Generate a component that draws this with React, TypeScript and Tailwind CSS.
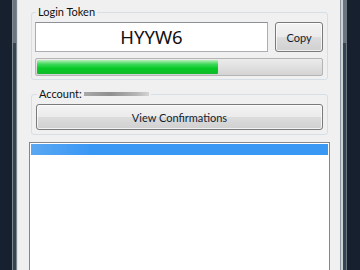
import * as React from 'react';

const btn =
  "rounded-[3px] border border-[#7a7a7a] bg-[linear-gradient(to_bottom,#f3f3f3_0%,#ebebeb_48%,#dcdcdc_52%,#d0d0d0_100%)] shadow-[inset_0_0_0_1px_rgba(255,255,255,0.7)] text-[11px] leading-none text-[#121c30] flex items-center justify-center";

function FrameLeft() {
  return (
    <div className="flex h-full">
      <div className="w-[1px] bg-[#7f8993]" />
      <div className="w-[3px] flex flex-col">
        <div className="h-[43px] bg-[#6a7580]" />
        <div className="flex-1 bg-[#364351]" />
      </div>
      <div className="w-[1px] bg-[#7b858f]" />
      <div className="w-[1px] bg-[#dfe3e6]" />
    </div>
  );
}

function FrameRight() {
  return (
    <div className="flex h-full">
      <div className="w-[1px] bg-[#8e979f]" />
      <div className="w-[2px] bg-[#cdd2d6]" />
      <div className="w-[3px] flex flex-col">
        <div className="h-[43px] bg-[#6a7580]" />
        <div className="flex-1 bg-[#364351]" />
      </div>
      <div className="w-[1px] bg-[#6c7680]" />
    </div>
  );
}

export default function App() {
  return (
    <div className="w-[360px] h-[270px] flex bg-[#16202e] overflow-hidden font-['Lato','Noto_Sans',sans-serif]">
      <div className="w-[12px]" />
      <FrameLeft />

      <main className="w-[322px] h-full bg-[#f0f0f0] flex flex-col">
        {/* Login token group */}
        <fieldset className="mt-[4px] ml-[13px] w-[297px] border border-[#d5dfe5] rounded-[3px] pl-[3px] pr-[4px] pt-[2px] pb-[3px]">
          <legend className="ml-[1px] px-[2px] text-[11px] leading-[16px] text-[#111]">Login Token</legend>
          <div className="flex gap-[7px] h-[30px]">
            <div className="w-[233px] h-full bg-white border border-[#abadb3] border-t-[#8d9096] flex items-center justify-center font-['Noto_Sans',sans-serif] text-[18.5px] leading-none text-[#111]">
              HYYW6
            </div>
            <button className={`${btn} w-[48px] h-full`}>Copy</button>
          </div>
          <div className="mt-[6px] h-[18px] w-[288px] rounded-[2px] border border-[#b4b4b4] bg-[linear-gradient(to_bottom,#ececec,#d4d4d4)] p-[1px]">
            <div
              className="h-full rounded-[1px] bg-[linear-gradient(to_bottom,#b9efbc_0%,#3fd85a_30%,#06c925_60%,#10b92b_100%)]"
              style={{ width: 181 }}
            />
          </div>
        </fieldset>

        {/* Account group */}
        <fieldset className="mt-[6px] ml-[13px] w-[297px] border border-[#d5dfe5] rounded-[3px] px-[4px] pt-[2px] pb-[4px]">
          <legend className="ml-[1px] px-[2px] text-[11px] leading-[16px] text-[#111] flex items-center">
            Account:
            <span className="ml-[2px] inline-block h-[4px] w-[65px] bg-[linear-gradient(to_right,#a9a9a9,#8f8f8f_40%,#b5b5b5_80%,#d4d4d4)]" />
          </legend>
          <button className={`${btn} w-full h-[26px]`}>View Confirmations</button>
        </fieldset>

        {/* Confirmations list */}
        <div className="mt-[7px] ml-[11px] w-[301px] flex-1 bg-white border border-[#828790] border-b-0 pt-[1px] px-[1px]">
          <div className="h-[11px] bg-[linear-gradient(to_right,#5aa7f2,#3a98f5_20%,#3a98f5)]" />
        </div>
      </main>

      <FrameRight />
      <div className="flex-1" />
    </div>
  );
}
